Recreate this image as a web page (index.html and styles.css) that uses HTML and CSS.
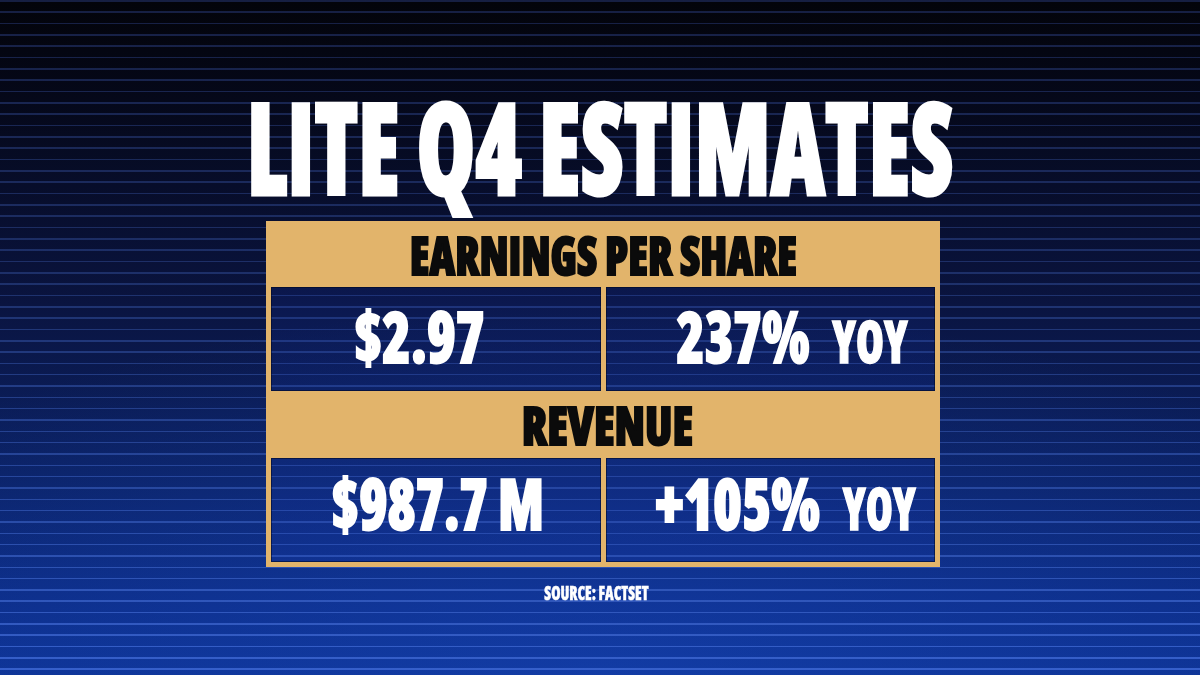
FILE: index.html
```html
<!DOCTYPE html>
<html lang="en">
<head>
<meta charset="utf-8">
<title>LITE Q4 Estimates</title>
<link rel="stylesheet" href="styles.css">
</head>
<body>
  <h1 class="title"><span class="sq sq-title">LITE Q4 ESTIMATES</span></h1>
  <section class="board">
    <div class="hdr"><span class="sq hdr-text sq-eps">EARNINGS PER SHARE</span></div>
    <div class="row row-1">
      <div class="cell cell-left"><span class="sq grp g-eps"><span class="num">$2.97</span></span></div>
      <div class="cell cell-right"><span class="sq grp g-237"><span class="num">237%</span><span class="yoy">YOY</span></span></div>
    </div>
    <div class="hdr hdr-rev"><span class="sq hdr-text sq-rev">REVENUE</span></div>
    <div class="row row-2">
      <div class="cell cell-left"><span class="sq grp g-rev"><span class="num">$987.7 M</span></span></div>
      <div class="cell cell-right"><span class="sq grp g-105"><span class="num">+105%</span><span class="yoy">YOY</span></span></div>
    </div>
  </section>
  <p class="source"><span class="sq sq-src">SOURCE: FACTSET</span></p>
</body>
</html>
```

FILE: styles.css
```css
html {
  height: 100%;
  background:
    radial-gradient(ellipse 75% 55% at 50% 100%, rgba(28, 78, 200, 0.35), rgba(28, 78, 200, 0) 100%),
    linear-gradient(to bottom, #03040a 0%, #05081a 15%, #0a1440 45%, #0b2266 70%, #0c2d88 90%, #0d3292 100%);
}

body {
  margin: 0;
  height: 675px;
  padding-top: 82px;
  box-sizing: border-box;
  overflow: hidden;
  font-family: "Open Sans", "Roboto", sans-serif;
  font-weight: 800;
  font-stretch: 75%;
}

body::before {
  content: "";
  position: fixed;
  inset: 0;
  z-index: -1;
  pointer-events: none;
  background: linear-gradient(to bottom, #161f42 0%, #1d2f68 40%, #284aa4 75%, #3660cc 100%);
  -webkit-mask-image: repeating-linear-gradient(to bottom, #000 0px, #000 1.6px, transparent 1.6px, transparent 11.33px);
  mask-image: repeating-linear-gradient(to bottom, #000 0px, #000 1.6px, transparent 1.6px, transparent 11.33px);
}

.sq {
  display: inline-block;
  white-space: nowrap;
  transform-origin: center center;
}

/* Title */
.title {
  margin: 0;
  display: flex;
  justify-content: center;
  font-size: 128px;
  line-height: 128px;
  font-weight: 800;
  color: #ffffff;
}

.sq-title {
  line-height: 128px;
  -webkit-text-stroke: 3px #ffffff;
  transform: scaleX(0.739);
}

/* Board */
.board {
  width: 674px;
  box-sizing: border-box;
  margin: 11px 0 0 266px;
  border: 5px solid #e2b46b;
  border-top: 0;
}

.hdr {
  height: 66px;
  box-sizing: border-box;
  padding-top: 6.5px;
  display: flex;
  justify-content: center;
  align-items: flex-start;
  background: #e2b46b;
  color: #0b0b0b;
}

.hdr-rev {
  height: 67px;
}

.hdr-text {
  font-size: 53px;
  line-height: 53px;
  -webkit-text-stroke: 2px #0b0b0b;
}

.sq-eps {
  transform: scaleX(0.84);
}

.sq-rev {
  margin-left: 8px;
  transform: scaleX(0.879);
}

.row {
  display: grid;
  grid-template-columns: 335px 329px;
  height: 104px;
}

.cell {
  display: flex;
  justify-content: center;
  align-items: flex-start;
  background: rgba(22, 60, 190, 0.12);
  box-shadow: inset 0 0 0 1px rgba(0, 8, 35, 0.55);
  color: #ffffff;
  box-sizing: border-box;
}

.cell-left {
  border-right: 5px solid #e2b46b;
  background-clip: padding-box;
}

.row-1 .cell {
  padding-top: 13px;
}

.row-2 .cell {
  padding-top: 9px;
}

.grp {
  display: inline-flex;
  align-items: baseline;
}

.num {
  font-size: 71px;
  line-height: 71px;
  -webkit-text-stroke: 2px #ffffff;
}

.yoy {
  font-size: 58px;
  line-height: 58px;
  -webkit-text-stroke: 1.5px #ffffff;
  transform-origin: left center;
}

.g-eps {
  margin-left: -34px;
  transform: scaleX(0.817);
}

.g-237 {
  gap: 28px;
  margin-left: 43px;
  transform: scaleX(0.807);
}

.g-237 .yoy {
  transform: scaleX(0.96);
  margin-right: -4px;
}

.g-rev {
  margin-left: 2px;
  transform: scaleX(0.804);
}

.g-105 {
  gap: 27px;
  margin-left: 30px;
  transform: scaleX(0.825);
}

.g-105 .yoy {
  transform: scaleX(0.91);
  margin-right: -8px;
}

/* Source */
.source {
  margin: 16px 0 0;
  display: flex;
  justify-content: center;
  color: #ffffff;
}

.sq-src {
  margin-left: -8px;
  font-size: 20px;
  line-height: 20px;
  -webkit-text-stroke: 0.5px #ffffff;
  transform: scaleX(0.75);
}
```
